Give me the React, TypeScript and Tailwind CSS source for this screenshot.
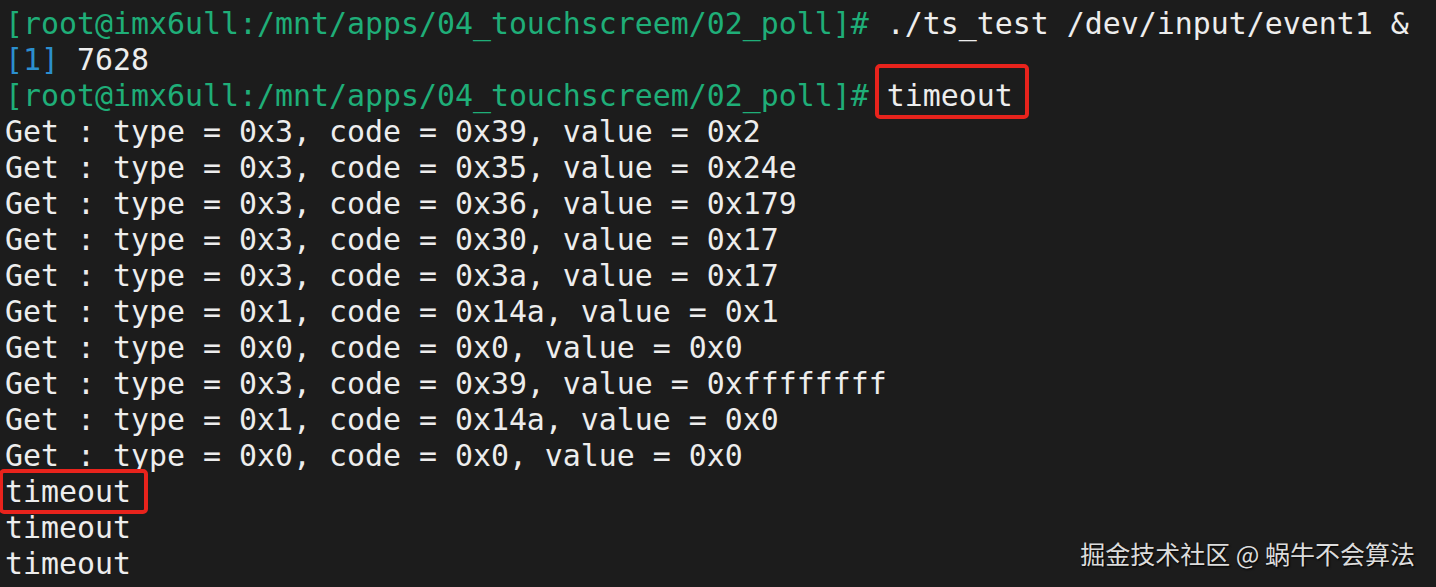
import React from 'react';

const PROMPT = '[root@imx6ull:/mnt/apps/04_touchscreem/02_poll]#';

const events = [
  ['0x3', '0x39', '0x2'],
  ['0x3', '0x35', '0x24e'],
  ['0x3', '0x36', '0x179'],
  ['0x3', '0x30', '0x17'],
  ['0x3', '0x3a', '0x17'],
  ['0x1', '0x14a', '0x1'],
  ['0x0', '0x0', '0x0'],
  ['0x3', '0x39', '0xffffffff'],
  ['0x1', '0x14a', '0x0'],
  ['0x0', '0x0', '0x0'],
];

function Line({ children }: { children?: React.ReactNode }) {
  return <div className="h-[36px] leading-[36px] whitespace-pre">{children}</div>;
}

export default function App() {
  return (
    <div className="relative w-[1436px] h-[587px] overflow-hidden bg-[#1c1c1c]">
      <div
        className="pl-[5px] pt-[6px] text-[29.9px] text-[#ededed]"
        style={{ fontFamily: '"DejaVu Sans Mono", "Liberation Mono", monospace' }}
      >
        <Line>
          <span className="text-[#1fae78]">{PROMPT}</span> ./ts_test /dev/input/event1 &amp;
        </Line>
        <Line>
          <span className="text-[#2b8fce]">[1]</span> 7628
        </Line>
        <Line>
          <span className="text-[#1fae78]">{PROMPT}</span>{' '}
          <span className="relative">
            timeout
            <span className="absolute -left-[12px] -right-[16px] -top-[14px] -bottom-[6px] border-[4px] border-[#e8231c] rounded-[5px]" />
          </span>
        </Line>
        {events.map(([t, c, v], i) => (
          <Line key={i}>{`Get : type = ${t}, code = ${c}, value = ${v}`}</Line>
        ))}
        <Line>
          <span className="relative">
            timeout
            <span className="absolute -left-[6px] -right-[17px] -top-[5px] -bottom-[5px] border-[4px] border-[#e8231c] rounded-[5px]" />
          </span>
        </Line>
        <Line>timeout</Line>
        <Line>timeout</Line>
      </div>
      <div
        className="absolute right-[21px] top-[536px] text-[25px] leading-[34px] text-[#dcdcdc] [text-shadow:1px_1px_2px_#000]"
        style={{ fontFamily: '"Noto Sans CJK SC", "Noto Sans", sans-serif' }}
      >
        掘金技术社区 @ 蜗牛不会算法
      </div>
    </div>
  );
}
